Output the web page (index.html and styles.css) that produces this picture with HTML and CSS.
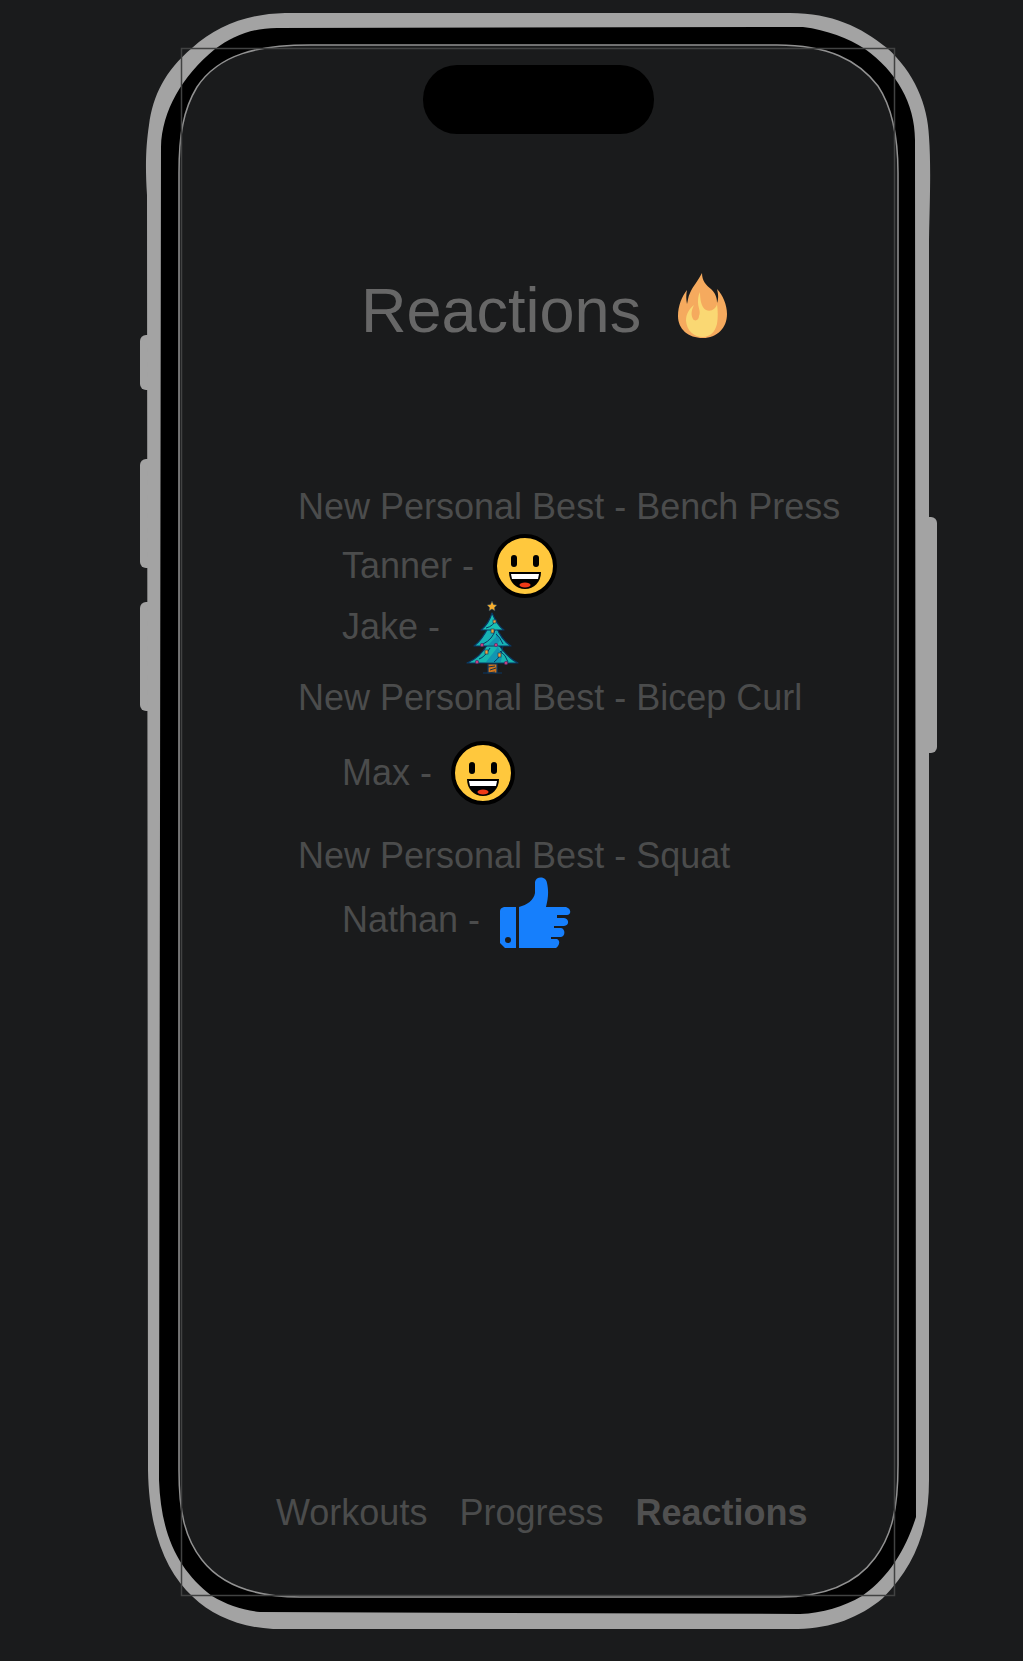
FILE: index.html
```html
<!DOCTYPE html>
<html lang="en">
<head>
<meta charset="utf-8">
<meta name="viewport" content="width=device-width, initial-scale=1">
<title>Reactions</title>
<link rel="stylesheet" href="styles.css">
</head>
<body>
<svg class="symbols" width="0" height="0" aria-hidden="true">
  <symbol id="grin" viewBox="0 0 64 64">
    <circle cx="32" cy="32" r="30" fill="#ffc83d" stroke="#000" stroke-width="4"/>
    <rect x="18" y="21" width="6" height="12" rx="3"/>
    <rect x="40" y="21" width="6" height="12" rx="3"/>
    <path d="M16 38H48C48 48 41 55 32 55S16 48 16 38Z"/>
    <path d="M18 40H46L45 45H19Z" fill="#fff"/>
    <ellipse cx="32" cy="51" rx="5.500" ry="2.500" fill="#f03a17"/>
  </symbol>
</svg>
<div class="phone">
  <svg class="frame" viewBox="140 13 797 1617" aria-hidden="true">
    <g fill="#a3a3a3">
      <rect x="140" y="335" width="20" height="55" rx="6"/>
      <rect x="140" y="459" width="20" height="109" rx="6"/>
      <rect x="140" y="602" width="20" height="109" rx="6"/>
      <rect x="917" y="517" width="20" height="236" rx="6"/>
      <path d="M285 13H790C832 13 861 27 887 48C914 72 928 105 929 137C931 165 930 195 929 240V1480C929 1530 915 1565 883 1598C859 1618 832 1628 798 1629H273C238 1627 212 1615 193 1597C165 1571 149 1530 148 1470L147 195C145 165 146 145 149 125C153 95 165 71 192 48C217 26 246 14 285 13Z"/>
    </g>
    <path d="M277 28L803 27C827 30 848 38 865 49C896 71 915 103 915 140L916 1517C904 1555 885 1580 862 1596C843 1607 823 1613 800 1614L260 1612C242 1610 227 1605 212 1596C178 1570 161 1535 159 1480L161 147C162 111 182 76 215 49C233 36 252 28 277 28Z"/>
    <path d="M310 45H777C828 45 858 60 878 86C892 107 898 137 898 173V1465C898 1509 892 1535 875 1558C856 1584 824 1597 780 1597H300C258 1597 223 1587 202 1560C184 1537 179 1510 179 1470V173C179 136 183 110 197 87C219 54 258 45 310 45Z" fill="#1a1b1c" stroke="#929292" stroke-width="1.5"/>
    <rect x="181.500" y="48.500" width="713" height="1547" fill="none" stroke="#414242" stroke-width="1.500"/>
    <rect x="423" y="65" width="231" height="69" rx="34"/>
  </svg>
  <div class="screen">
    <header class="header">
      <h1>Reactions</h1>
      <svg class="flame" viewBox="0 0 49 65" aria-hidden="true">
        <path d="M24 0C20 8 15 13 12 20C10 24 10 27 9 31C8 26 8 22 9 17C4 23 0 33 0 43C0 56 10 65 25 65C39 65 49 55 49 41C49 32 45 22 39 16C40 20 41 25 39 30C39 24 37 20 33 16C28 12 24 8 24 0Z" fill="#f5aa5e"/>
        <path d="M22 19C20 23 20 26 20 29C20 35 23 38 21 43C21 47 17 49 15 46C13 42 13 38 16 32C11 36 8 41 8 48C9 58 16 64 25 64C32 64 37 59 39 51C40 45 40 38 39 31C38 36 33 39 28 37C23 34 22 26 22 19Z" fill="#fad873"/>
      </svg>
    </header>
    <main>
      <section>
        <h2>New Personal Best - Bench Press</h2>
        <ul class="bench">
          <li><span>Tanner -</span><svg class="grin" role="img" aria-label="Grin"><use href="#grin"/></svg></li>
          <li class="top"><span>Jake -</span>
            <svg class="tree" viewBox="0 0 60 76" role="img" aria-label="Christmas tree">
              <g stroke="#093864" stroke-width="1.200" stroke-linejoin="round">
                <path d="M29 66H38V75H29ZM24 75H43" fill="#cd741d"/>
                <path d="M30 44C25 53 18 61 8 65H59C49 60 43 52 38 44Z" fill="#17b7b0"/>
                <path d="M30 28C26 36 22 43 15 48H52C44 43 40 36 37 28Z" fill="#16b2b5"/>
                <path d="M33 15C31 22 27 28 22 32H45C39 28 36 22 33 15Z" fill="#19bfb5"/>
              </g>
              <path d="M37 45L43 57L42 64H27L38 50Z" fill="#1195b1"/>
              <path d="M37 33L41 42L38 47H29L37 39Z" fill="#1195b1"/>
              <path d="M27 30Q35 28 37 21M24 46Q34 41 36 32M44 46Q41 39 37 36M20 61Q26 59 31 50M35 64Q43 58 44 48M49 64Q47 57 41 53" fill="none" stroke="#093864"/>
              <path d="M33 3L34.500 6.500L38 7L35.500 9.500L36 13L33 11L30 13L30.500 9.500L28 7L31.500 6.500Z" fill="#f6ae2d" stroke="#17406a" stroke-width=".5"/>
              <path d="M29 69L36 68M31 72L37 70M29 75L36 74" stroke="#17334c" stroke-width="1"/>
              <g fill="#f3a33c" stroke="#24415a" stroke-width=".7"><rect x="34" y="22" width="3" height="3"/><rect x="32" y="31" width="3" height="4"/><rect x="26" y="52" width="3" height="4"/><rect x="39" y="55" width="3" height="4"/></g>
              <g fill="#c5407f" stroke="#493067" stroke-width=".7"><circle cx="23" cy="47" r="1.700"/><circle cx="37" cy="47" r="1.700"/><circle cx="18" cy="64" r="1.700"/><circle cx="47" cy="65" r="1.700"/></g>
            </svg>
          </li>
        </ul>
      </section>
      <section>
        <h2>New Personal Best - Bicep Curl</h2>
        <ul class="curl">
          <li><span>Max -</span><svg class="grin" role="img" aria-label="Grin"><use href="#grin"/></svg></li>
        </ul>
      </section>
      <section>
        <h2>New Personal Best - Squat</h2>
        <ul class="squat">
          <li class="bottom"><span>Nathan -</span>
            <svg class="thumb" viewBox="0 0 72 72" role="img" aria-label="Thumbs up">
              <path fill="#167ffc" fill-rule="evenodd" d="M5 30H17V71H6L1 66V34Q1 31 5 30ZM9 60A3 3 0 1 0 9 66A3 3 0 1 0 9 60Z"/>
              <path fill="#167ffc" d="M20 71V30C28 28 35 23 36 16L36 5C37 -1 47 -1 48 6C50 15 49 22 47 30H67C73 32 72 38 68 38H58V41H65C71 42 70 49 65 49H55V51H62C67 52 66 60 62 60H52V62H58C62 64 60 69 57 71Z"/>
            </svg>
          </li>
        </ul>
      </section>
    </main>
    <nav>
      <a href="#workouts">Workouts</a>
      <a href="#progress">Progress</a>
      <a href="#reactions" aria-current="page">Reactions</a>
    </nav>
  </div>
</div>
</body>
</html>
```
FILE: styles.css
```css
* { box-sizing: border-box; }

body {
  margin: 0;
  padding: 13px 86px 31px 140px;
  background: #1a1b1c;
  color: #4b4c4c;
  font: 36px/42px "Liberation Sans", Arial, sans-serif;
}

.symbols { position: absolute; }

.phone {
  display: grid;
  max-width: 797px;
}

.frame,
.screen { grid-area: 1 / 1; }

.frame {
  display: block;
  width: 100%;
}

.screen {
  display: flex;
  flex-direction: column;
  padding: 260px 0 96px;
}

.header {
  display: flex;
  gap: 37px;
  padding-left: 221px;
  margin-bottom: 139px;
}

h1, h2 {
  margin: 0;
  font-weight: 400;
}

h1 {
  color: #676767;
  font-size: 63px;
  line-height: 74px;
}

h2 { font-size: 36px; }

.flame { width: 49px; height: 65px; }

main { padding-left: 158px; }

ul {
  list-style: none;
  margin: 0;
  padding: 0 0 0 44px;
}

.bench { padding-top: 6px; padding-bottom: 3px; }
.curl { padding-top: 22px; padding-bottom: 30px; }
.squat { padding-top: 0; }

li {
  display: flex;
  align-items: center;
  gap: 19px;
  line-height: 58px;
}

.top { align-items: flex-start; }
.bottom { align-items: flex-end; }

.grin { width: 64px; height: 64px; }
.tree { width: 60px; height: 76px; }
.thumb { width: 72px; height: 72px; }

nav {
  display: flex;
  gap: 32px;
  margin-top: auto;
  padding-left: 136px;
}

nav a {
  color: inherit;
  text-decoration: none;
}

nav a[aria-current] {
  color: #505050;
  font-weight: 700;
}
```
